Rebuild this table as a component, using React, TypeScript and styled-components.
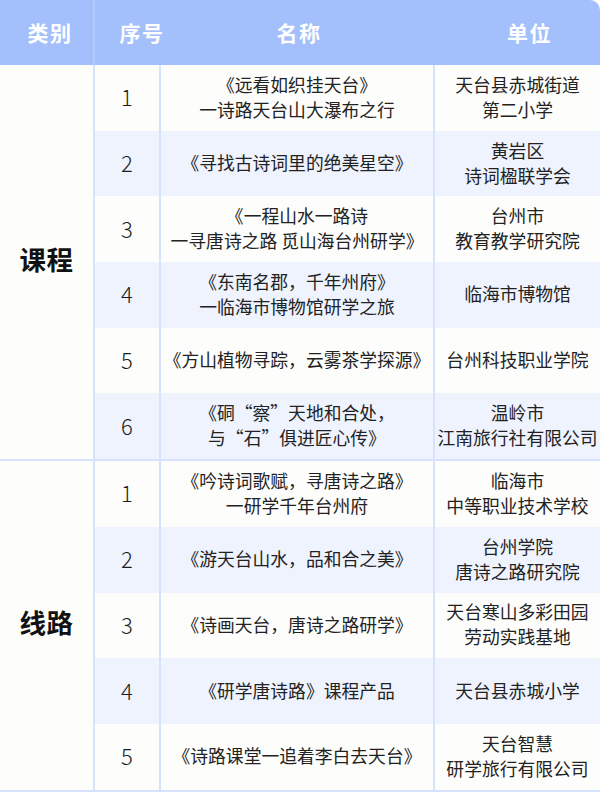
import { FunctionComponent } from "react";
import styled, { createGlobalStyle } from "styled-components";

const GlobalStyle = createGlobalStyle`
    html, body {
        margin: 0;
        padding: 0;
        background: #ffffff;
    }
    body {
        font-family: "Noto Sans CJK SC", "Noto Sans", sans-serif;
        color: #222222;
    }
`;

const COLS = "93px 66px 274px 167px";
const LINE = "2px solid #d7e3fd";

const Table = styled.div`
    width: 600px;
    overflow: hidden;
`;

const HeaderRow = styled.div`
    display: grid;
    grid-template-columns: ${COLS};
    height: 65px;
    background-color: #a4c0fc;
    border-top-right-radius: 10px;
`;

// header titles sit a little right of the body column centres
const HeadCell = styled.div<{ $shift: number; $line?: boolean }>`
    display: flex;
    align-items: center;
    justify-content: center;
    color: #ffffff;
    font-size: 21px;
    font-weight: 700;
    letter-spacing: 1.5px;
    white-space: nowrap;
    padding-bottom: 1px;
    padding-left: ${({ $shift }) => $shift}px;
    border-left: ${({ $line }) => ($line ? "2px solid #b2cafc" : "none")};
`;

const Group = styled.div`
    display: grid;
    grid-template-columns: 93px 1fr;
    border-bottom: ${LINE};
`;

const Category = styled.div`
    display: flex;
    align-items: center;
    justify-content: center;
    background-color: #fdfdf9;
    font-size: 26.5px;
    font-weight: 700;
    color: #111111;
    letter-spacing: 0.5px;
    padding-bottom: 8px;
`;

const Rows = styled.div`
    display: flex;
    flex-direction: column;
`;

const Row = styled.div<{ $alt: boolean }>`
    display: grid;
    grid-template-columns: 66px 274px 167px;
    height: 65.7px;
    background-color: ${({ $alt }) => ($alt ? "#eef3fe" : "#fdfdfb")};
`;

const Cell = styled.div`
    display: flex;
    flex-direction: column;
    align-items: center;
    justify-content: center;
    border-left: ${LINE};
    text-align: center;
    font-size: 17.8px;
    line-height: 25px;
    white-space: nowrap;
    padding-bottom: 2px;
`;

const NumCell = styled(Cell)`
    font-size: 22px;
    font-weight: 300;
    color: #1c1c1c;
`;

interface Item {
    name: string[];
    unit: string[];
}

const courses: Item[] = [
    { name: ["《远看如织挂天台》", "一诗路天台山大瀑布之行"], unit: ["天台县赤城街道", "第二小学"] },
    { name: ["《寻找古诗词里的绝美星空》"], unit: ["黄岩区", "诗词楹联学会"] },
    { name: ["《一程山水一路诗", "一寻唐诗之路 觅山海台州研学》"], unit: ["台州市", "教育教学研究院"] },
    { name: ["《东南名郡，千年州府》", "一临海市博物馆研学之旅"], unit: ["临海市博物馆"] },
    { name: ["《方山植物寻踪，云雾茶学探源》"], unit: ["台州科技职业学院"] },
    { name: ["《硐“察”天地和合处，", "与“石”俱进匠心传》"], unit: ["温岭市", "江南旅行社有限公司"] },
];

const routes: Item[] = [
    { name: ["《吟诗词歌赋，寻唐诗之路》", "一研学千年台州府"], unit: ["临海市", "中等职业技术学校"] },
    { name: ["《游天台山水，品和合之美》"], unit: ["台州学院", "唐诗之路研究院"] },
    { name: ["《诗画天台，唐诗之路研学》"], unit: ["天台寒山多彩田园", "劳动实践基地"] },
    { name: ["《研学唐诗路》课程产品"], unit: ["天台县赤城小学"] },
    { name: ["《诗路课堂一追着李白去天台》"], unit: ["天台智慧", "研学旅行有限公司"] },
];

const GroupBlock: FunctionComponent<{ title: string; items: Item[] }> = ({ title, items }) => (
    <Group>
        <Category>{title}</Category>
        <Rows>
            {items.map((item, i) => (
                <Row key={i} $alt={i % 2 === 1}>
                    <NumCell>{i + 1}</NumCell>
                    <Cell>
                        {item.name.map((line) => (
                            <span key={line}>{line}</span>
                        ))}
                    </Cell>
                    <Cell>
                        {item.unit.map((line) => (
                            <span key={line}>{line}</span>
                        ))}
                    </Cell>
                </Row>
            ))}
        </Rows>
    </Group>
);

const App: FunctionComponent = () => {
    return (
        <>
            <GlobalStyle />
            <Table>
                <HeaderRow>
                    <HeadCell $shift={7}>类别</HeadCell>
                    <HeadCell $shift={30} $line>序号</HeadCell>
                    <HeadCell $shift={6}>名称</HeadCell>
                    <HeadCell $shift={26}>单位</HeadCell>
                </HeaderRow>
                <GroupBlock title="课程" items={courses} />
                <GroupBlock title="线路" items={routes} />
            </Table>
        </>
    );
};

export default App;
